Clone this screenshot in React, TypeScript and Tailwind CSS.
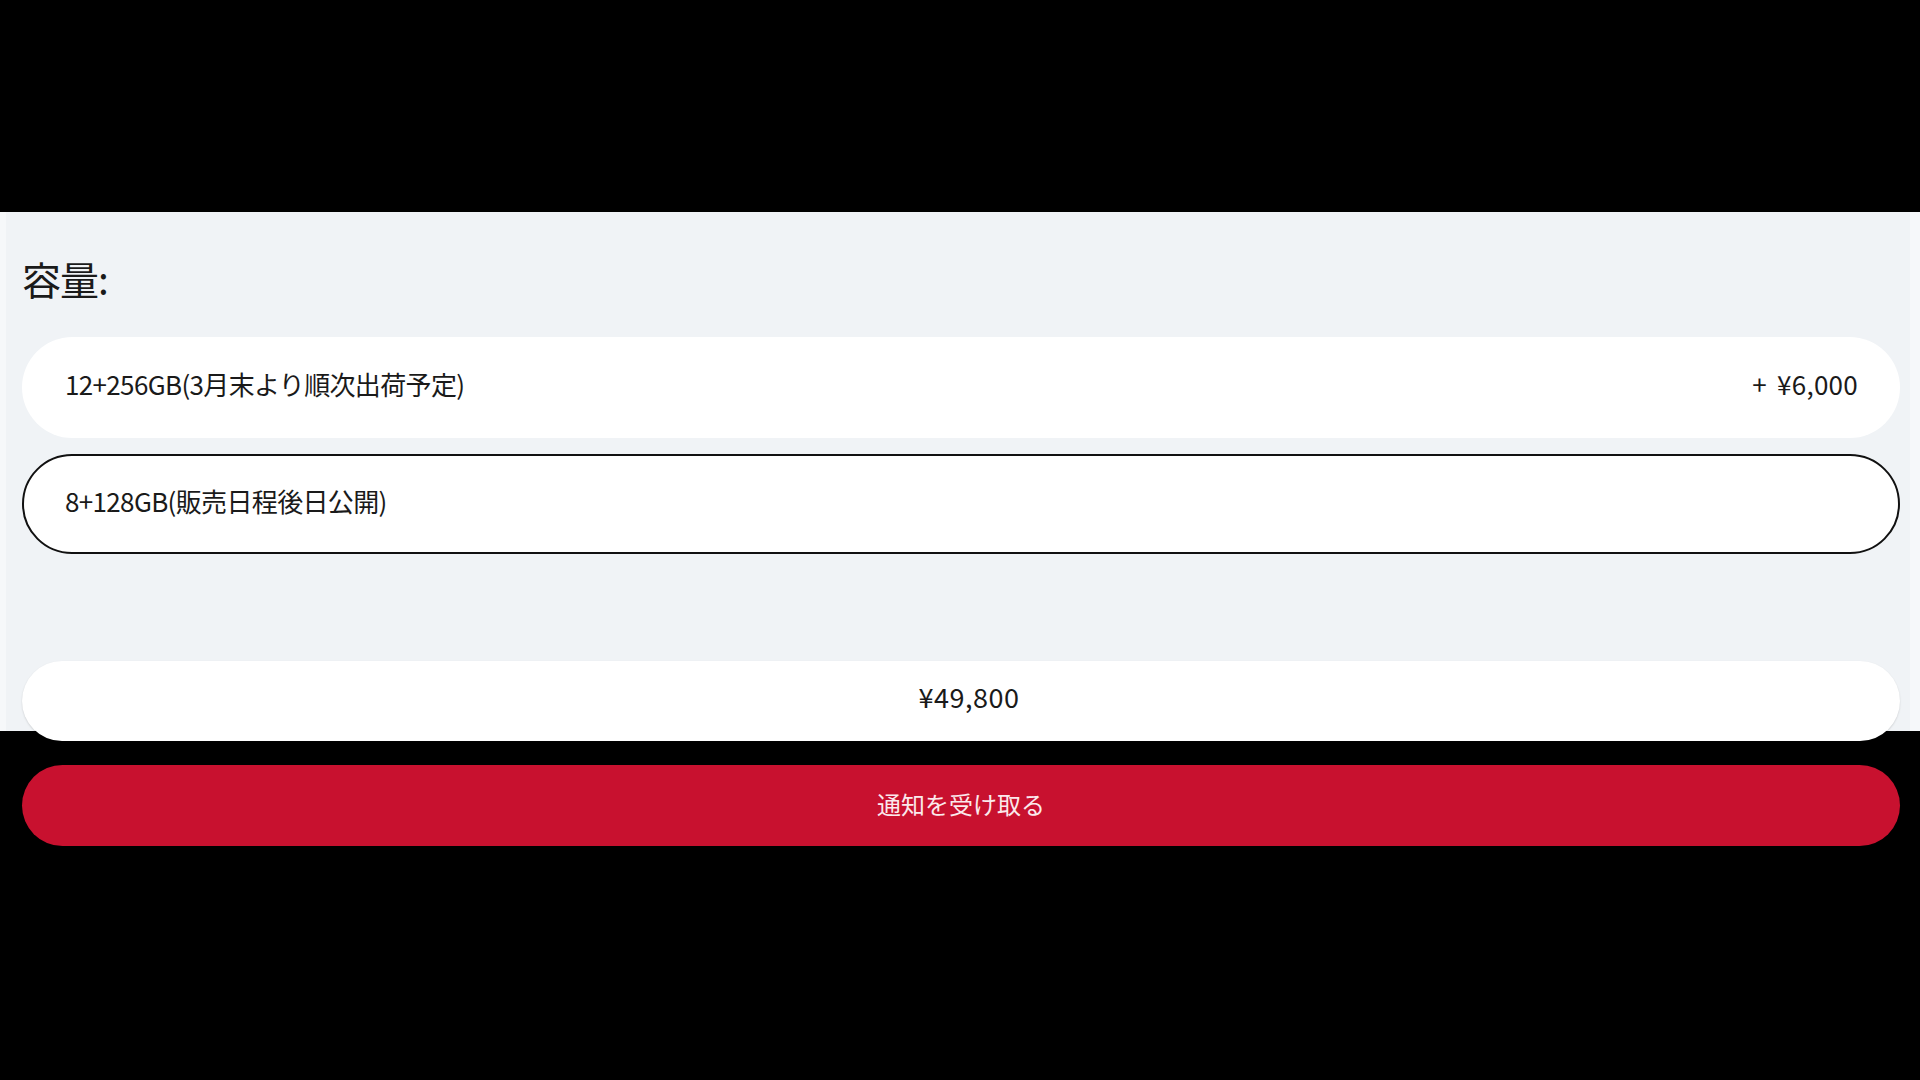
import React from 'react';

const font = { fontFamily: '"Noto Sans CJK JP", "Noto Sans", sans-serif' };

export default function App() {
  const options = [
    { label: '12+256GB(3月末より順次出荷予定)', extra: '+ ¥6,000', selected: false },
    { label: '8+128GB(販売日程後日公開)', extra: '', selected: true },
  ];

  return (
    <div className="w-full h-[1080px] bg-black flex flex-col text-[#1a1a1a]" style={font}>
      {/* Top black area */}
      <div className="h-[212px] shrink-0"></div>

      {/* Capacity panel */}
      <div className="h-[519px] shrink-0 bg-[#f0f3f6] border-l-[6px] border-r-[10px] border-[#f6f8fa] pl-[16px] pr-[10px]">
        <h2 className="mt-[47px] text-[39px] leading-none tracking-tight">容量:</h2>
        <div className="mt-[39px] flex flex-col gap-[16px]">
          {options.map((opt, i) => (
            <div
              key={i}
              className={
                opt.selected
                  ? 'h-[100px] rounded-full bg-white border-2 border-[#111] flex items-center justify-between pl-[41px] pr-[40px] pb-[8px]'
                  : 'h-[101px] rounded-full bg-white flex items-center justify-between pl-[43px] pr-[42px] pb-[9px]'
              }
            >
              <span className="text-[26px] tracking-[-0.025em]">{opt.label}</span>
              <span className="text-[26px] tracking-[0.01em] [word-spacing:4px]">{opt.extra}</span>
            </div>
          ))}
        </div>
      </div>

      {/* Price + notify */}
      <div className="-mt-[70px] px-[22px] pr-[20px] flex flex-col gap-[24px] relative">
        <div className="h-[80px] rounded-full bg-white shadow-[0_1px_2px_rgba(0,0,0,0.15)] flex items-center justify-center pl-4 pb-[8px]">
          <span className="text-[27px] tracking-[0.02em]">¥49,800</span>
        </div>
        <button className="h-[81px] rounded-full bg-[#c8112f] flex items-center justify-center pb-[4px]">
          <span className="text-[24px] text-[#fbe9ec]">通知を受け取る</span>
        </button>
      </div>
    </div>
  );
}
